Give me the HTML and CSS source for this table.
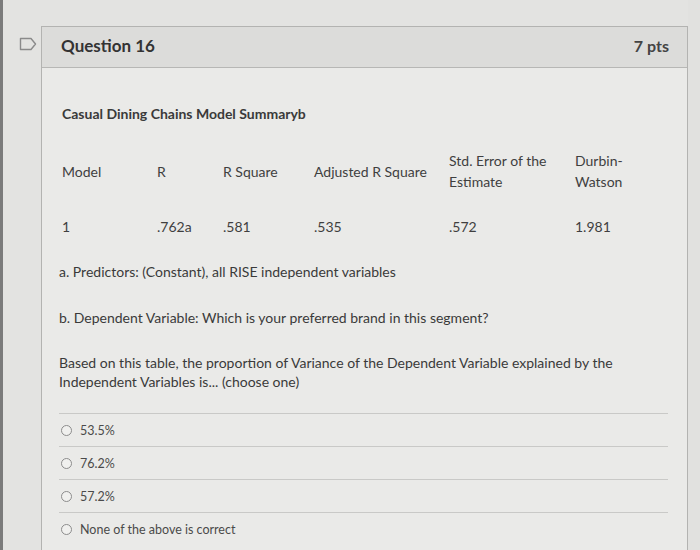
FILE: index.html
```html
<!DOCTYPE html>
<html>
<head>
<meta charset="utf-8">
<link rel="stylesheet" href="styles.css">
</head>
<body>
<div class="page">
  <div class="gutter">
    <svg class="flag" width="18" height="14" viewBox="0 0 18 14">
      <path d="M1.5 1.5 H12 L16.5 7 L12 12.5 H1.5 Z" fill="none" stroke="#8a8a8a" stroke-width="1.4" stroke-linejoin="round"/>
    </svg>
  </div>
  <div class="card">
    <div class="card-head">
      <span class="q-title">Question 16</span>
      <span class="q-pts">7 pts</span>
    </div>
    <div class="card-body">
      <p class="t-title">Casual Dining Chains Model Summaryb</p>
      <table class="summary">
        <colgroup>
          <col class="c1"><col class="c2"><col class="c3"><col class="c4"><col class="c5"><col class="c6">
        </colgroup>
        <tr class="hrow">
          <td>Model</td>
          <td>R</td>
          <td>R Square</td>
          <td>Adjusted R Square</td>
          <td>Std. Error of the<br>Estimate</td>
          <td>Durbin-<br>Watson</td>
        </tr>
        <tr class="drow">
          <td>1</td>
          <td>.762a</td>
          <td>.581</td>
          <td>.535</td>
          <td>.572</td>
          <td>1.981</td>
        </tr>
      </table>
      <p class="note note-a">a. Predictors: (Constant), all RISE independent variables</p>
      <p class="note note-b">b. Dependent Variable: Which is your preferred brand in this segment?</p>
      <p class="note note-q">Based on this table, the proportion of Variance of the Dependent Variable explained by the Independent Variables is... (choose one)</p>
      <div class="answers">
        <label class="answer"><span class="radio"></span>53.5%</label>
        <label class="answer"><span class="radio"></span>76.2%</label>
        <label class="answer"><span class="radio"></span>57.2%</label>
        <label class="answer"><span class="radio"></span>None of the above is correct</label>
      </div>
    </div>
  </div>
  <div class="right-edge"></div>
</div>
</body>
</html>
```
FILE: styles.css
```css
html, body {
  margin: 0;
  padding: 0;
}
body {
  background: #e3e3e1;
  font-family: Lato, "Open Sans", sans-serif;
  color: #383838;
  width: 700px;
  height: 550px;
  overflow: hidden;
}
.page {
  display: flex;
  height: 550px;
  border-left: 3px solid #7b7b7b;
  box-sizing: border-box;
}
.gutter {
  width: 38px;
  flex: none;
  padding-top: 37px;
  padding-left: 16px;
  box-sizing: border-box;
}
.flag {
  display: block;
}
.card {
  margin-top: 26px;
  width: 647px;
  flex: none;
  border: 1px solid #b3b3b1;
  border-bottom: none;
  background: #eaeae8;
  box-sizing: border-box;
}
.card-head {
  height: 41px;
  background: #dcdcda;
  border-bottom: 1px solid #b7b7b5;
  display: flex;
  align-items: center;
  justify-content: space-between;
  padding: 0 18px 3px 19px;
  box-sizing: border-box;
}
.q-title {
  font-size: 17px;
  font-weight: 700;
  color: #333;
}
.q-pts {
  font-size: 16px;
  font-weight: 700;
  color: #444;
}
.card-body {
  padding: 0 20px 0 17px;
}
.t-title {
  margin: 37px 0 0 3px;
  font-size: 14px;
  font-weight: 700;
  line-height: 18px;
  color: #3a3a3a;
}
.summary {
  border-collapse: collapse;
  margin: 27px 0 0 3px;
  font-size: 14px;
  color: #3f3f3f;
  table-layout: fixed;
  width: 600px;
}
.c1 { width: 95px; }
.c2 { width: 66px; }
.c3 { width: 91px; }
.c4 { width: 135px; }
.c5 { width: 126px; }
.c6 { width: 87px; }
.summary td {
  padding: 0;
  vertical-align: middle;
  line-height: 21px;
}
.hrow td {
  height: 42px;
}
.drow td {
  height: 21px;
  padding-top: 24px;
}
.note {
  margin: 0;
  font-size: 14px;
  line-height: 19px;
  color: #3a3a3a;
}
.note-a {
  margin-top: 25px;
}
.note-b {
  margin-top: 27px;
}
.note-q {
  margin-top: 26px;
  width: 570px;
}
.answers {
  margin-top: 22px;
  width: 609px;
}
.answer {
  display: flex;
  align-items: center;
  height: 32px;
  border-top: 1px solid #c9c9c7;
  font-size: 12.5px;
  color: #4a4a4a;
  padding-left: 2px;
}
.radio {
  width: 11px;
  height: 11px;
  border: 1px solid #8c8c8c;
  border-radius: 50%;
  box-sizing: border-box;
  margin-right: 8px;
  background: #f0f0ee;
}
.right-edge {
  flex: 1;
  background: #e1e1df;
}
```
